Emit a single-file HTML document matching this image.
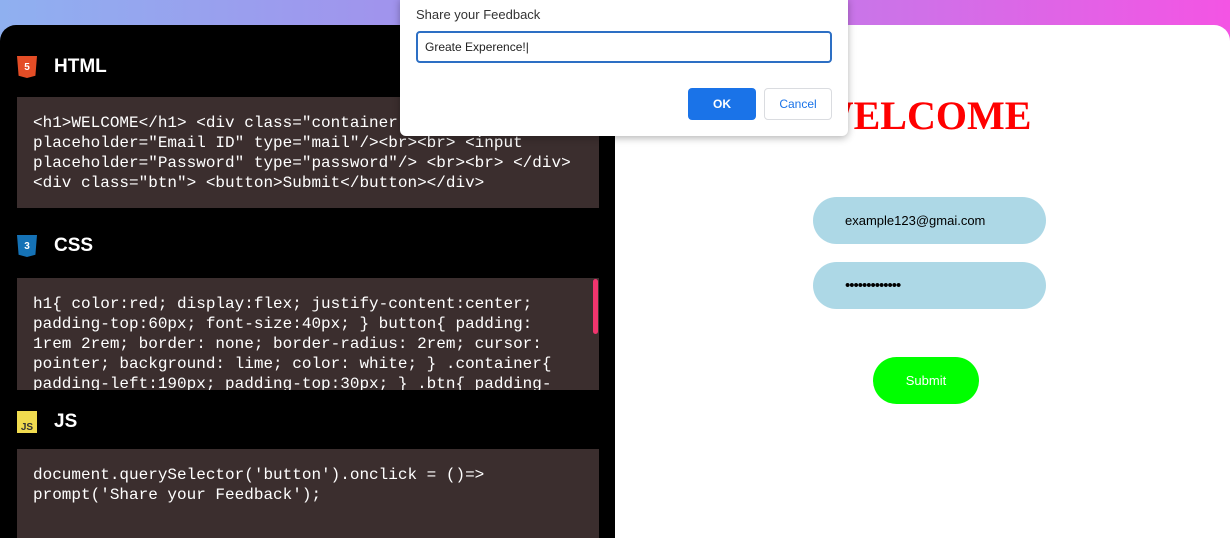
<!DOCTYPE html>
<html><head><style>
body{margin:0;width:1230px;height:538px;overflow:hidden;background:linear-gradient(90deg,#8fb0f0 0%,#a58cec 40%,#d070e8 75%,#f454e4 100%);position:relative;font-family:"Liberation Sans",sans-serif}
.left{position:absolute;left:0;top:25px;width:615px;height:513px;background:#000;border-top-left-radius:16px}
.right{position:absolute;left:615px;top:25px;width:615px;height:513px;background:#fff;border-top-right-radius:16px}
.hd{position:absolute;left:17px;color:#fff;font-weight:bold;font-size:19px;display:flex;align-items:center}
.hd .ic{width:20px;height:22px;margin-right:17px;display:flex;align-items:center;justify-content:center;font-size:10px;color:#fff}
.box{position:absolute;left:17px;width:582px;background:#3b2e2e;color:#fff;font-family:"Liberation Mono",monospace;font-size:16px;line-height:20px;box-sizing:border-box;padding:16px 16px;overflow:hidden;white-space:pre}
.dlg{position:absolute;left:400px;top:-2px;width:448px;height:138px;background:#fff;border-radius:0 0 6px 6px;box-shadow:0 2px 8px rgba(0,0,0,.3);font-size:13px;color:#333}
</style></head><body>
<div class="left"></div>
<div class="right"></div>
<div class="hd" style="top:56px"><div class="ic" style="background:#e44d26;clip-path:polygon(0 0,100% 0,92% 90%,50% 100%,8% 90%)">5</div>HTML</div>
<div class="box" style="top:97px;height:111px">&lt;h1&gt;WELCOME&lt;/h1&gt; &lt;div class="container"&gt; &lt;input
placeholder="Email ID" type="mail"/&gt;&lt;br&gt;&lt;br&gt; &lt;input
placeholder="Password" type="password"/&gt; &lt;br&gt;&lt;br&gt; &lt;/div&gt;
&lt;div class="btn"&gt; &lt;button&gt;Submit&lt;/button&gt;&lt;/div&gt;</div>
<div class="hd" style="top:235px"><div class="ic" style="background:#1572b6;clip-path:polygon(0 0,100% 0,92% 90%,50% 100%,8% 90%)">3</div>CSS</div>
<div class="box" style="top:278px;height:112px">h1{ color:red; display:flex; justify-content:center;
padding-top:60px; font-size:40px; } button{ padding:
1rem 2rem; border: none; border-radius: 2rem; cursor:
pointer; background: lime; color: white; } .container{
padding-left:190px; padding-top:30px; } .btn{ padding-</div>
<div style="position:absolute;left:593px;top:279px;width:5px;height:55px;background:#f0356e;border-radius:3px"></div>
<div class="hd" style="top:411px"><div class="ic" style="background:#f0db4f;color:#333;align-items:flex-end;font-size:10px">JS</div>JS</div>
<div class="box" style="top:449px;height:89px">document.querySelector('button').onclick = ()=&gt;
prompt('Share your Feedback');</div>
<div style="position:absolute;left:615px;top:92px;width:615px;text-align:center;color:red;font-family:'Liberation Serif',serif;font-weight:bold;font-size:40px">WELCOME</div>
<div style="position:absolute;left:813px;top:197px;width:233px;height:47px;border-radius:24px;background:#add8e6;font-size:13px;line-height:47px;padding-left:32px;box-sizing:border-box">example123@gmai.com</div>
<div style="position:absolute;left:813px;top:262px;width:233px;height:47px;border-radius:24px;background:#add8e6;font-size:15px;line-height:47px;padding-left:32px;box-sizing:border-box;letter-spacing:-1px">•••••••••••••</div>
<div style="position:absolute;left:873px;top:357px;width:106px;height:47px;border-radius:24px;background:#0f0;color:#fff;font-size:13px;line-height:47px;text-align:center">Submit</div>
<div class="dlg">
<div style="position:absolute;left:16px;top:9px">Share your Feedback</div>
<div style="position:absolute;left:16px;top:33px;width:416px;height:32px;border:2px solid #2d6fc4;border-radius:4px;box-sizing:border-box;font-size:12px;line-height:28px;padding-left:7px;color:#222">Greate Experence!|</div>
<div style="position:absolute;left:288px;top:90px;width:68px;height:32px;background:#1a73e8;color:#fff;border-radius:4px;text-align:center;line-height:32px;font-weight:bold;font-size:12px">OK</div>
<div style="position:absolute;left:364px;top:90px;width:68px;height:32px;border:1px solid #dadce0;box-sizing:border-box;color:#1a73e8;border-radius:4px;text-align:center;line-height:30px;font-size:12px">Cancel</div>
</div>
</body></html>
